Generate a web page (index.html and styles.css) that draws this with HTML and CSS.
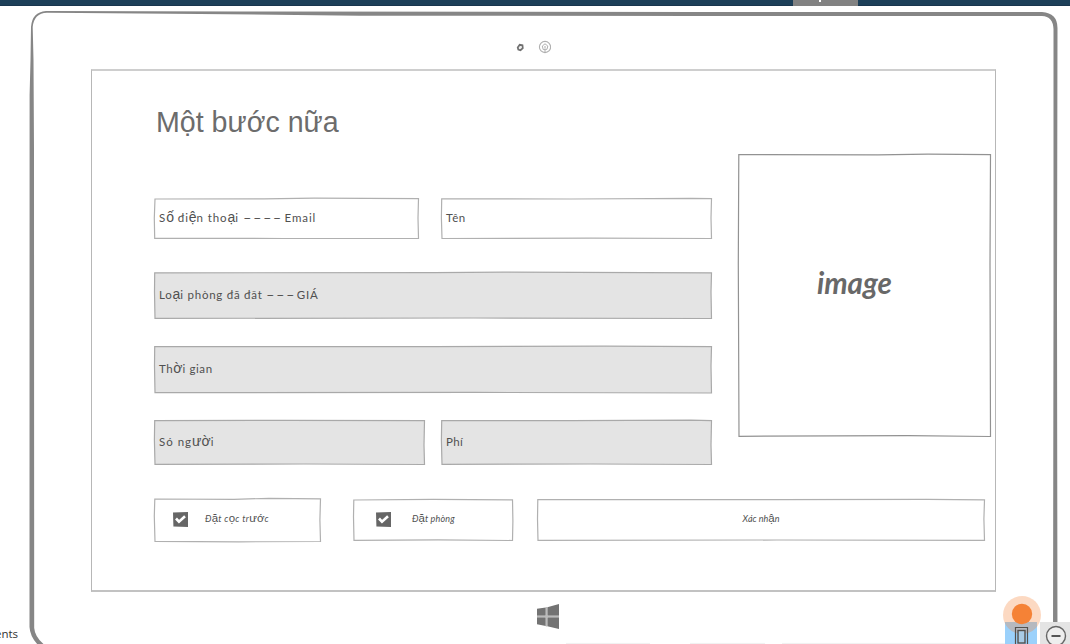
FILE: index.html
```html
<!DOCTYPE html>
<html lang="vi">
<head>
<meta charset="utf-8">
<title>Một bước nữa</title>
<link rel="stylesheet" href="styles.css">
</head>
<body>
<header class="topbar"><div class="tab"><i></i></div></header>
<main class="device">
  <svg class="frame" viewBox="0 6 1070 638" aria-hidden="true">
    <path fill="#868686" fill-rule="evenodd" d="M31 27Q32 12 46 11L240 11.500L700 12L1042 12Q1057.500 13 1057.500 28L1057 300L1057.500 650H1053L1053.500 300V29Q1053 16.500 1042 16L830 16L700 16L360 15.700L200 14L80 13L47 12.700Q34 13 32.700 27L33.500 60L34 150L34.200 628Q35 638 46 646H39Q30 637 29.500 627L29.600 95L30.500 60Z"/>
    <path d="M566 643.400H650M690 643.400H765M782 643.400H1005" stroke="#f0f0f0" fill="none"/>
  </svg>
  <div class="camera">
    <svg width="36" height="14" viewBox="515 40 36 14"><path d="M517.700 47.500L519.700 44.800L522.500 45.300L522.800 48.200L520.500 50.200L518.300 49.600Z" fill="#eee" stroke="#707070" stroke-width="1.700"/><circle cx="545" cy="47" r="5.600" fill="none" stroke="#b0b0b0" stroke-width="1.100"/><path d="M545 43.800L547.800 46L547 49.300L543.200 49.500L542.300 46Z" fill="none" stroke="#b0b0b0"/><path d="M545 46V48.500M545 50V52" stroke="#aaa"/></svg>
  </div>
  <section class="screen">
    <h1>Một bước nữa</h1>
    <div class="content">
      <form class="form">
        <div class="row r1">
          <div class="box narrow"><svg viewBox="0 0 265 41"><path d="M1 1L110 .8L160 .2L264.500 .7L264 20L264.500 40.300L130 40.500L.7 40.300L.3 20Z"/></svg><span class="t1">S<b>ố</b> đi<b>ệ</b>n tho<b>ạ</b>i <i class="dash">----</i> Email</span></div>
          <div class="box end"><svg viewBox="0 0 271 41"><path d="M.7 .8L130 1L250 .3L270.500 .7L270 20L270.500 40.500L150 40.200L1 40.500L.4 20Z"/></svg><span class="t2">Tên</span></div>
        </div>
        <div class="box filled r2"><svg viewBox="0 0 558 47"><path d="M.7 .8L280 .7L350 .2L557.500 .8L557 20L557.500 46.500L320 46L1 46.400L.5 20Z"/></svg><span class="t3">Lo<b>ạ</b>i phòng đã đăt <i class="dash">---</i> GIÁ</span></div>
        <div class="box filled r3"><svg viewBox="0 0 558 47"><path d="M.7 .5L280 .6L450 .2L557.500 .6L557 20L557.500 47L320 46.400L1 46.600L.5 20Z"/></svg><span class="t4">Th<b>ờ</b>i gian</span></div>
        <div class="row r4">
          <div class="box filled wide"><svg viewBox="0 0 271 45"><path d="M.7 .6L130 .4L270.500 .7L270 25L270.500 44.500L150 44L1 44.400L.4 20Z"/></svg><span class="t5">Só ng<b>ườ</b>i</span></div>
          <div class="box filled end"><svg viewBox="0 0 271 45"><path d="M.7 .6L130 .7L250 .2L270.500 .7L270 25L270.500 44.500L150 44L1 44.400L.4 20Z"/></svg><span class="t6">Phí</span></div>
        </div>
      </form>
      <div class="image box"><svg viewBox="0 0 253 283"><path d="M.8 .7L140 .8L190 .2L252.500 .7L252 110L252.500 282.500L170 281.700L1 282.300L.3 110Z"/></svg><span>image</span></div>
    </div>
    <div class="actions">
      <div class="box check deposit"><svg viewBox="0 0 167 44"><path d="M.8 1L80 1.300L115 .3L166.500 .8L165.900 22L166.500 43.500L85 43.800L1 43.400L.3 18Z"/></svg><svg class="tick" viewBox="0 0 15 15"><path d="M0 .5L15 0V15L.4 14.500Z"/><path class="mark" d="M3 6.500L6 9.700L12 4.300"/></svg><span class="t7">Đ<b>ặ</b>t c<b>ọ</b>c tr<b>ướ</b>c</span></div>
      <div class="box check booking"><svg viewBox="0 0 160 42"><path d="M.8 1L80 .4L159.500 .8L159.900 22L159.500 41.500L85 40.800L1 41.400L.5 18Z"/></svg><svg class="tick" viewBox="0 0 15 15"><path d="M0 .5L15 0V15L.4 14.500Z"/><path class="mark" d="M3 6.500L6 9.700L12 4.300"/></svg><span class="t8">Đ<b>ặ</b>t phòng</span></div>
      <div class="box confirm"><svg viewBox="0 0 448 42"><path d="M.8 .7L240 .6L390 .3L447.500 .8L446.900 20L447.500 41.300L240 41L1 41.400L.5 20Z"/></svg><span class="t9">Xác nh<b>ậ</b>n</span></div>
    </div>
  </section>
  <svg class="windows" width="24" height="26" viewBox="0 0 24 26"><path fill="#737373" d="M1 4.700L9.800 3.500V11.800H1ZM11.300 3.200L23 0V11.800H11.300ZM1 13.300H9.800V22L1 20.300ZM11.300 13.300H23V25L11.300 22.300Z"/><path d="M1 12.500H23M10.500 3V22.500" stroke="#bbb" stroke-width="1.500"/></svg>
</main>
<div class="clipped">ents</div>
<svg class="controls" viewBox="1000 594 70 50" aria-hidden="true">
  <path fill="#9bd1fb" d="M1005 622h32v22h-32z"/><path fill="#e4e4e4" d="M1040 622h30v22h-30z"/>
  <circle cx="1022" cy="615" r="19" fill="#f58235" fill-opacity=".3"/><circle cx="1022" cy="614" r="10.200" fill="#f58236"/>
  <path d="M1015.500 650V627.500H1027.500V650" fill="none" stroke="#55514d" stroke-width="1.200"/><rect x="1018" y="630.500" width="7" height="12.500" fill="#a9cbe5" stroke="#55514d" stroke-width="1.400"/>
  <circle cx="1056" cy="636" r="9.500" fill="#eee" stroke="#666" stroke-width="1.400"/><path d="M1051.500 636H1060.500" stroke="#555" stroke-width="2"/>
</svg>
</body>
</html>
```

FILE: styles.css
```css
* { box-sizing: border-box; }
body { margin: 0; width: 1070px; height: 644px; overflow: hidden; position: relative; background: #fff; font-family: "Liberation Sans", sans-serif; }
.topbar { height: 6px; background: #1d4059; border-bottom: 1px solid #19364e; padding-left: 793px; }
.tab { width: 65px; height: 6px; background: #828282; padding-left: 26px; }
.tab i { display: block; width: 2px; height: 2px; background: #fff; }
.device { position: relative; height: 638px; padding: 34px 74px 0 91px; }
.frame { position: absolute; inset: 0; width: 1070px; height: 638px; }
.camera { height: 29px; padding-left: 424px; }
.camera svg { display: block; }
.screen { width: 905px; height: 523px; border: 1px solid #b7b7b7; border-top: 2px solid #cecece; border-bottom: 2px solid #c2c2c2; padding-left: 62px; }
h1 { margin: 0; height: 83px; padding: 34px 0 0 2px; font-size: 28.6px; line-height: 34px; font-weight: 400; color: #6c6c6c; white-space: nowrap; }
.content { display: flex; gap: 26px; height: 344px; }
.form { width: 558px; padding-top: 44px; }
.row { display: flex; justify-content: space-between; }
.r1 { height: 41px; margin-bottom: 33px; }
.r2 { height: 47px; margin-bottom: 27px; }
.r3 { height: 47px; margin-bottom: 27px; }
.r4 { height: 45px; }
.box { position: relative; display: flex; align-items: center; padding-left: 5px; color: #505050; font: 11.5px Lato, sans-serif; white-space: nowrap; }
.box > svg:first-child { position: absolute; inset: 0; width: 100%; height: 100%; overflow: visible; fill: none; stroke: #b0b0b0; stroke-width: 1.2; }
.box.filled > svg:first-child { fill: #e4e4e4; stroke: #a9a9a9; }
.box span { position: relative; line-height: 18px; padding-bottom: 2px; }
.box b { font: 14px/10px "Liberation Sans", sans-serif; letter-spacing: 0; }
.box .dash { display: inline-block; font-style: normal; letter-spacing: .7px; transform: scaleX(2); transform-origin: left; }
.t1 { letter-spacing: .9px; }
.t1 .dash { margin: 0 18px 0 0; }
.t3 { letter-spacing: .75px; }
.t3 .dash { margin: 0 12px 0 0; }
.t2, .t4 { letter-spacing: .6px; }
.t5 { letter-spacing: 1px; }
.t6 { letter-spacing: .3px; }
.narrow { width: 265px; }
.wide, .end { width: 271px; }
.image { width: 253px; height: 283px; padding: 0 0 23px 79px; color: #686868; font-size: 29.5px; font-weight: 700; font-style: italic; }
.image > svg:first-child { stroke: #929292; }
.image span { line-height: 38px; }
.actions { display: flex; height: 44px; }
.actions .box { font-size: 9px; font-style: italic; }
.actions .box b { font-size: 11.5px; }
.deposit { width: 167px; margin-right: 32px; padding-left: 19px; }
.booking { width: 160px; height: 42px; margin: 1px 24px 0 0; padding-left: 23px; }
.confirm { width: 448px; height: 42px; margin-top: 1px; justify-content: center; padding: 0; }
.t7 { letter-spacing: .4px; }
.t8 { letter-spacing: .15px; }
.tick { position: relative; top: -1px; width: 15px; height: 15px; margin-right: 17px; fill: #666; overflow: visible; flex: none; }
.booking .tick { margin-right: 21px; }
.tick .mark { fill: none; stroke: #fff; stroke-width: 2.6; }
.windows { display: block; margin: 12px 0 0 445px; }
.clipped { position: absolute; left: -5px; top: 625px; font: 11.5px/17px "Open Sans", sans-serif; color: #333; }
.controls { position: absolute; left: 1000px; top: 594px; width: 70px; height: 50px; }
```
